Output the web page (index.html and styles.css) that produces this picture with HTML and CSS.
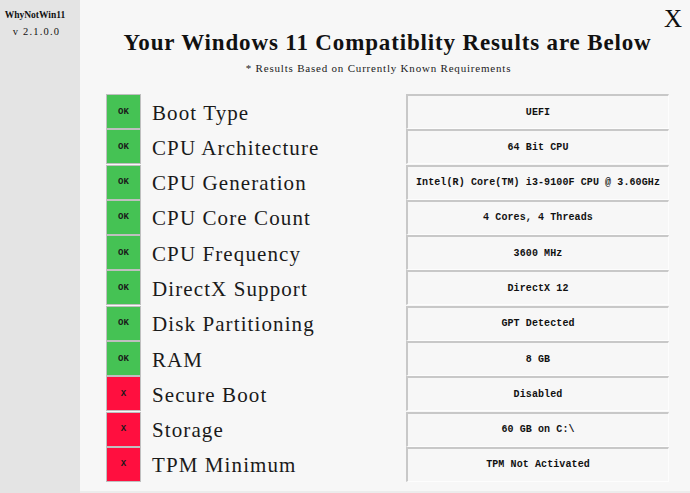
FILE: index.html
```html
<!DOCTYPE html>
<html>
<head>
<meta charset="utf-8">
<link rel="stylesheet" href="styles.css">
</head>
<body>
<div class="app">
  <aside class="sidebar">
    <div class="app-name">WhyNotWin11</div>
    <div class="app-version">v 2.1.0.0</div>
  </aside>
  <main class="main">
    <div class="close">X</div>
    <h1 class="title">Your Windows 11 Compatiblity Results are Below</h1>
    <p class="subtitle">* Results Based on Currently Known Requirements</p>
    <div class="results">
      <div class="row"><div class="status ok">OK</div><div class="label">Boot Type</div><div class="value">UEFI</div></div>
      <div class="row"><div class="status ok">OK</div><div class="label">CPU Architecture</div><div class="value">64 Bit CPU</div></div>
      <div class="row"><div class="status ok">OK</div><div class="label">CPU Generation</div><div class="value">Intel(R) Core(TM) i3-9100F CPU @ 3.60GHz</div></div>
      <div class="row"><div class="status ok">OK</div><div class="label">CPU Core Count</div><div class="value">4 Cores, 4 Threads</div></div>
      <div class="row"><div class="status ok">OK</div><div class="label">CPU Frequency</div><div class="value">3600 MHz</div></div>
      <div class="row"><div class="status ok">OK</div><div class="label">DirectX Support</div><div class="value">DirectX 12</div></div>
      <div class="row"><div class="status ok">OK</div><div class="label">Disk Partitioning</div><div class="value">GPT Detected</div></div>
      <div class="row"><div class="status ok">OK</div><div class="label">RAM</div><div class="value">8 GB</div></div>
      <div class="row"><div class="status fail">X</div><div class="label">Secure Boot</div><div class="value">Disabled</div></div>
      <div class="row"><div class="status fail">X</div><div class="label">Storage</div><div class="value">60 GB on C:\</div></div>
      <div class="row"><div class="status fail">X</div><div class="label">TPM Minimum</div><div class="value">TPM Not Activated</div></div>
    </div>
  </main>
</div>
</body>
</html>
```
FILE: styles.css
```css
html, body {
  margin: 0;
  padding: 0;
}
body {
  width: 690px;
  height: 493px;
  overflow: hidden;
  background: #f7f7f7;
}
.app {
  display: flex;
  height: 493px;
}
.sidebar {
  width: 80px;
  flex: none;
  background: #e4e4e4;
  display: flex;
  flex-direction: column;
  align-items: center;
  padding: 9px 10px 0 0;
  box-sizing: border-box;
  color: #111;
}
.app-name {
  font-family: "Liberation Serif", serif;
  font-weight: bold;
  font-size: 9.5px;
  line-height: 12px;
  letter-spacing: 0px;
}
.app-version {
  font-family: "Liberation Serif", serif;
  font-size: 10.5px;
  line-height: 12px;
  letter-spacing: 1.2px;
  margin-top: 5px;
  padding-left: 3px;
}
.main {
  flex: 1;
  position: relative;
  background: #f7f7f7;
  padding: 0 21px 0 26px;
  border-bottom: 2px solid #ececec;
  box-sizing: border-box;
}
.close {
  position: absolute;
  top: 5px;
  right: 8px;
  font-family: "Liberation Serif", serif;
  font-size: 25px;
  line-height: 28px;
  color: #111;
}
.title {
  margin: 30px 0 0;
  text-align: center;
  font-family: "Liberation Serif", serif;
  font-weight: bold;
  font-size: 23px;
  line-height: 26px;
  letter-spacing: 0.85px;
  color: #111;
}
.subtitle {
  margin: 6px 0 0;
  text-align: center;
  font-family: "Liberation Serif", serif;
  font-size: 11px;
  line-height: 12px;
  letter-spacing: 0.8px;
  color: #222;
  padding-right: 18px;
}
.results {
  margin-top: 20px;
  display: grid;
  grid-auto-rows: 35px;
  row-gap: 0.3px;
}
.row {
  display: grid;
  grid-template-columns: 35px 1fr 263px;
  align-items: stretch;
}
.status {
  box-sizing: border-box;
  border: 1px solid #bfbfbf;
  display: flex;
  align-items: center;
  justify-content: center;
  font-family: "Liberation Mono", monospace;
  font-weight: bold;
  font-size: 9px;
  color: #1a1a1a;
}
.status.ok {
  background: #45c254;
}
.status.fail {
  background: #ff0f3f;
}
.label {
  display: flex;
  align-items: center;
  padding: 3px 0 0 11px;
  font-family: "Liberation Serif", serif;
  font-size: 21px;
  letter-spacing: 1.1px;
  color: #1a1a1a;
}
.value {
  box-sizing: border-box;
  border-top: 2px solid #c8c8c8;
  border-left: 2px solid #c8c8c8;
  border-right: 1px solid #fdfdfd;
  border-bottom: 1px solid #fdfdfd;
  display: flex;
  align-items: center;
  justify-content: center;
  font-family: "Liberation Mono", monospace;
  font-weight: bold;
  font-size: 10px;
  letter-spacing: 0.1px;
  color: #111;
}
```
